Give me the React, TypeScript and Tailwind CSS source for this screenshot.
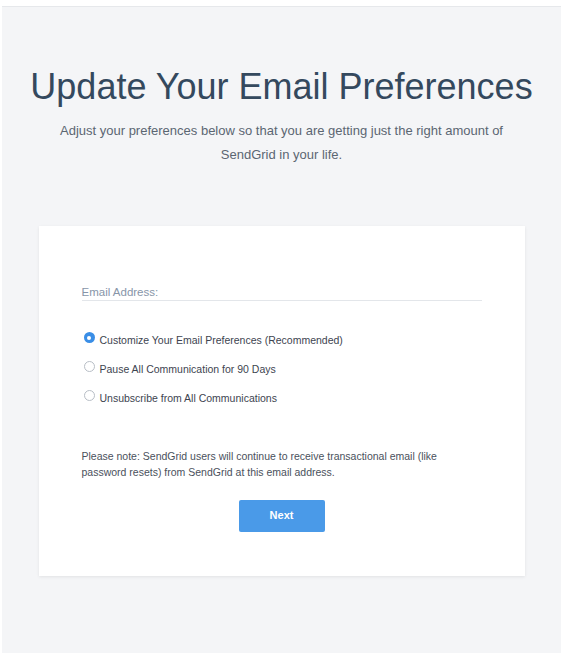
import { useState } from "react";

const options = [
  "Customize Your Email Preferences (Recommended)",
  "Pause All Communication for 90 Days",
  "Unsubscribe from All Communications",
];

export default function App() {
  const [selected, setSelected] = useState(0);

  return (
    <div className="h-[653px] w-[566px] bg-white pl-[2px] pr-[5px] pt-[6px] font-['Liberation_Sans',Arial,sans-serif]">
      <div className="h-full border-t border-[#e6e8eb] bg-[#f4f5f7] pt-[60px]">
        <h1 className="text-center text-[36px] font-light leading-[40px] text-[#34495e]">
          Update Your Email Preferences
        </h1>
        <p className="mx-auto mt-[12px] w-[480px] text-center text-[13px] leading-[24px] text-[#5b6672]">
          Adjust your preferences below so that you are getting just the right amount of
          <br />
          SendGrid in your life.
        </p>

        <div className="mx-auto mt-[59px] h-[350px] w-[486px] bg-white px-[43px] pt-[59px] shadow-[0_1px_3px_rgba(0,0,0,0.08)]">
          <div className="border-b border-[#e3e6ea] pb-[1px] text-[11.5px] leading-[14px] text-[#8795a8]">
            Email Address:
          </div>

          <ul className="mt-[29px] flex flex-col gap-[10.5px] pl-[2px]">
            {options.map((label, index) => (
              <li
                key={index}
                className="flex cursor-pointer items-start gap-[5px] text-[10.5px] leading-[16.5px] text-[#3d4450]"
                onClick={() => setSelected(index)}
              >
                {index === selected ? (
                  <span className="mt-[2px] flex h-[11px] w-[11px] shrink-0 items-center justify-center rounded-full bg-[#3a8ee6]">
                    <span className="h-[4px] w-[4px] rounded-full bg-white" />
                  </span>
                ) : (
                  <span className="mt-[2px] h-[11px] w-[11px] shrink-0 rounded-full border border-[#b8bec6] bg-white" />
                )}
                <span className="mt-[2px]">{label}</span>
              </li>
            ))}
          </ul>

          <p className="mt-[41px] text-[10.5px] leading-[16px] text-[#4a515c]">
            Please note: SendGrid users will continue to receive transactional email (like
            <br />
            password resets) from SendGrid at this email address.
          </p>

          <div className="mt-[20px] flex justify-center">
            <button className="h-[32px] w-[86px] rounded-[2px] bg-[#4a9ae8] text-[11px] font-bold text-white">
              Next
            </button>
          </div>
        </div>
      </div>
    </div>
  );
}
